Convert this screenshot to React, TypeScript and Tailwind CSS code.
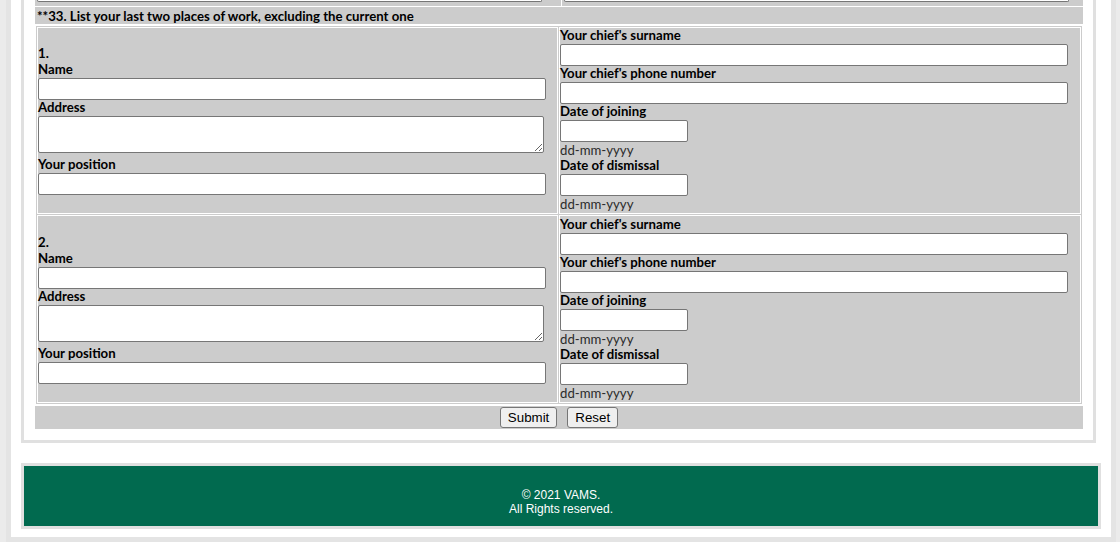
import React from 'react'

const label = 'block h-[16px] leading-[15px] text-[13.2px] font-bold text-black whitespace-nowrap'
const field = 'block h-[22px] bg-white border border-[#767676] rounded-[2px] outline-none'
const hint = 'block h-[16px] leading-[16px] text-[13.2px] text-[#2b2b2b]'

function Place({ n, first }: { n: number; first?: boolean }) {
  const cell = first ? 'border border-white pb-px' : 'border border-white pt-px pb-px'
  return (
    <div className="grid grid-cols-[521px_1fr] gap-px">
      <div className={`flex flex-col justify-center ${cell}`}>
        <span className={label}>{n}.</span>
        <span className={label}>Name</span>
        <input className={`${field} w-[508px]`} />
        <span className={label}>Address</span>
        <textarea className="block w-[506px] h-[37px] mb-[4px] bg-white border border-[#767676] rounded-[2px] outline-none" />
        <span className={label}>Your position</span>
        <input className={`${field} w-[508px]`} />
      </div>
      <div className={`flex flex-col ${cell}`}>
        <span className={label}>Your chief's surname</span>
        <input className={`${field} w-[508px]`} />
        <span className={label}>Your chief's phone number</span>
        <input className={`${field} w-[508px]`} />
        <span className={label}>Date of joining</span>
        <input className={`${field} w-[128px]`} />
        <span className={hint}>dd-mm-yyyy</span>
        <span className={label}>Date of dismissal</span>
        <input className={`${field} w-[128px]`} />
        <span className={hint}>dd-mm-yyyy</span>
      </div>
    </div>
  )
}

export default function App() {
  return (
    <div className="bg-[#ebebeb] pl-[6px] pr-[4px] font-[Lato,sans-serif]">
      <div className="bg-white border-x-[5px] border-b-[5px] border-[#e4e4e4] pb-[8px]">
        {/* form panel */}
        <div className="ml-[10px] mr-[15px] border-x-[3px] border-b-[3px] border-[#e0e0e0] pl-[11px] pr-[10px] pb-[11px]">
          <div className="flex flex-col gap-px">
            {/* bottom of the previous question */}
            <div className="grid grid-cols-[526px_1fr] gap-px h-[6px]">
              <div className="bg-[#ccc] pl-[2px]">
                <div className="w-[505px] h-[2px] bg-white border-x border-b border-[#767676] rounded-b-[2px]" />
              </div>
              <div className="bg-[#ccc] pl-[2px]">
                <div className="w-[505px] h-[2px] bg-white border-x border-b border-[#767676] rounded-b-[2px]" />
              </div>
            </div>

            <div className="bg-[#ccc] h-[17px] pt-px leading-[17px] px-[2px] text-[13.2px] font-bold text-black">
              **33. List your last two places of work, excluding the current one
            </div>

            <div className="bg-[#ccc] border border-white p-px flex flex-col gap-px">
              <Place n={1} first />
              <Place n={2} />
            </div>

            <div className="bg-[#ccc] py-px flex justify-center gap-[10px] font-['Liberation_Sans',Arial,sans-serif]">
              <button className="h-[21px] px-[7px] bg-[#efefef] border border-[#767676] rounded-[3px] text-[13.33px] text-black">
                Submit
              </button>
              <button className="h-[21px] px-[7px] bg-[#efefef] border border-[#767676] rounded-[3px] text-[13.33px] text-black">
                Reset
              </button>
            </div>
          </div>
        </div>

        {/* footer */}
        <div className="ml-[10px] mr-[10px] mt-[20px] border-[3px] border-[#e0e0e0]">
          <div className="bg-[#016a4f] h-[60px] pt-[22px] text-center text-white text-[12px] leading-[14px] font-['Liberation_Sans',Arial,sans-serif]">
            <div>© 2021 VAMS.</div>
            <div>All Rights reserved.</div>
          </div>
        </div>
      </div>
    </div>
  )
}
